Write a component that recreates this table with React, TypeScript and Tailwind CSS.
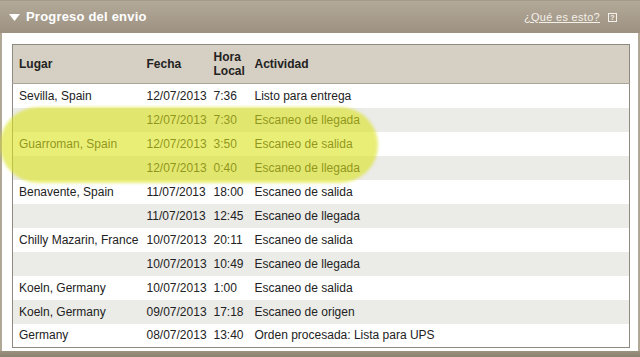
import React from "react";

const rows: [string, string, string, string][] = [
  ["Sevilla, Spain", "12/07/2013", "7:36", "Listo para entrega"],
  ["", "12/07/2013", "7:30", "Escaneo de llegada"],
  ["Guarroman, Spain", "12/07/2013", "3:50", "Escaneo de salida"],
  ["", "12/07/2013", "0:40", "Escaneo de llegada"],
  ["Benavente, Spain", "11/07/2013", "18:00", "Escaneo de salida"],
  ["", "11/07/2013", "12:45", "Escaneo de llegada"],
  ["Chilly Mazarin, France", "10/07/2013", "20:11", "Escaneo de salida"],
  ["", "10/07/2013", "10:49", "Escaneo de llegada"],
  ["Koeln, Germany", "10/07/2013", "1:00", "Escaneo de salida"],
  ["Koeln, Germany", "09/07/2013", "17:18", "Escaneo de origen"],
  ["Germany", "08/07/2013", "13:40", "Orden procesada: Lista para UPS"],
];

export default function App() {
  return (
    <div
      className="relative w-[640px] h-[357px] overflow-hidden bg-white flex flex-col"
      style={{ fontFamily: '"Liberation Sans", Arial, sans-serif' }}
    >
      {/* header bar */}
      <div className="h-[33px] shrink-0 border-t border-[#a39a8b] bg-gradient-to-b from-[#b3a999] to-[#9d9281] flex items-center pl-[9px] pr-[23px]">
        <svg width="11" height="9" viewBox="0 0 11 9" className="mr-[6px]">
          <polygon points="0,1 11,1 5.5,8" fill="#ffffff" />
        </svg>
        <span className="text-white font-bold text-[13px] tracking-[0.2px]">Progreso del envio</span>
        <div className="flex-1" />
        <span className="text-[#f4f0ea] text-[11px] underline tracking-[0.3px]">¿Qué es esto?</span>
        <span className="ml-[8px] w-[9px] h-[9px] border border-[#f4f0ea] text-[#f4f0ea] text-[7px] leading-[7px] flex items-center justify-center font-bold">?</span>
      </div>
      {/* body */}
      <div className="flex-1 border-l-2 border-r-2 border-[#b0a797] pl-[10px] pr-[8px] pt-[11px]">
        <table className="w-[618px] border border-[#8f8a80] border-collapse text-[12px] text-[#222]">
          <thead>
            <tr className="bg-[#d6cfc3] h-[39px] border-b border-[#a9a398]">
              <th className="w-[128px] text-left font-bold pl-[6px] align-middle">Lugar</th>
              <th className="w-[67px] text-left font-bold pl-[6px] align-middle">Fecha</th>
              <th className="w-[41px] text-left font-bold pl-[6px] align-middle leading-[14px]">
                Hora
                <br />
                Local
              </th>
              <th className="text-left font-bold pl-[6px] align-middle">Actividad</th>
            </tr>
          </thead>
          <tbody>
            {rows.map((r, i) => (
              <tr key={i} className={i % 2 === 0 ? "bg-white h-[24px]" : "bg-[#ebebe8] h-[24px]"}>
                <td className="pl-[6px] whitespace-nowrap">{r[0]}</td>
                <td className="pl-[6px] whitespace-nowrap">{r[1]}</td>
                <td className="pl-[6px] whitespace-nowrap">{r[2]}</td>
                <td className="pl-[6px] whitespace-nowrap">{r[3]}</td>
              </tr>
            ))}
          </tbody>
        </table>
      </div>
      {/* bottom bar */}
      <div className="h-[6px] shrink-0 bg-gradient-to-b from-[#9a917f] to-[#8a8170]" />
      {/* highlight overlay */}
      <div className="absolute left-[0px] top-[107px] w-[378px] h-[76px] rounded-[40px] bg-[#dbe31c]/60 blur-[1.5px] pointer-events-none" />
    </div>
  );
}
